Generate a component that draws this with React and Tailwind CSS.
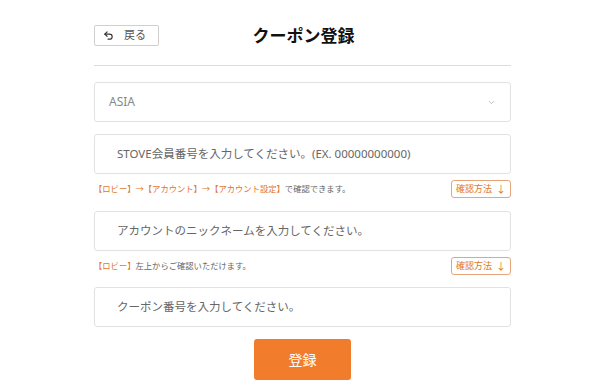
import React from 'react';
import { Undo2, ChevronDown } from 'lucide-react';

const font = { fontFamily: '"Noto Sans", "Noto Sans CJK JP", sans-serif' };

const Field = ({ placeholder }) => (
  <div className="flex h-[40px] items-center rounded-[3px] border border-[#e2e2e2] bg-white pl-[22px]">
    <span className="text-[11.5px] text-[#666]">{placeholder}</span>
  </div>
);

const Helper = ({ children }) => (
  <div className="mt-[6px] flex h-[18px] items-center justify-between">
    <p className="text-[8.3px] leading-none text-[#666]">{children}</p>
    <button className="flex h-[18px] w-[60px] items-center justify-center gap-1 rounded-[3px] border border-[#e8a57a] bg-white text-[9px] text-[#e0762d]">
      確認方法 <span className="text-[10px]">↓</span>
    </button>
  </div>
);

export default function App() {
  return (
    <div className="min-h-[389px] w-[600px] bg-white" style={font}>
      <div className="ml-[94px] w-[417px] pt-[25px]">
        <div className="relative flex h-[21px] items-center justify-center">
          <button className="absolute left-0 top-0 flex h-[21px] w-[65px] items-center gap-[10px] rounded-[2px] border border-[#cfcfcf] bg-white pl-[8px] text-[11px] text-[#555]">
            <Undo2 className="h-[11px] w-[11px] text-[#333]" strokeWidth={2.5} />
            戻る
          </button>
          <h1 className="pl-[2px] text-[17px] font-bold text-[#111]">クーポン登録</h1>
        </div>

        <div className="mt-[19px] h-px bg-[#dcdcdc]" />

        <div className="mt-[16px] flex h-[40px] items-center justify-between rounded-[3px] border border-[#e2e2e2] bg-white pl-[14px] pr-[14px]">
          <span className="text-[12px] text-[#888]">ASIA</span>
          <ChevronDown className="h-[9px] w-[9px] text-[#aaa]" />
        </div>

        <div className="mt-[12px]">
          <Field placeholder="STOVE会員番号を入力してください。(EX. 00000000000)" />
          <Helper>
            <span className="text-[#e0762d]">【ロビー】→【アカウント】→【アカウント設定】</span>で確認できます。
          </Helper>
        </div>

        <div className="mt-[13px]">
          <Field placeholder="アカウントのニックネームを入力してください。" />
          <Helper>
            <span className="text-[#e0762d]">【ロビー】</span>左上からご確認いただけます。
          </Helper>
        </div>

        <div className="mt-[12px]">
          <Field placeholder="クーポン番号を入力してください。" />
        </div>

        <div className="mt-[12px] flex justify-center">
          <button className="h-[41px] w-[97px] rounded-[3px] bg-[#f07c2c] text-[14px] text-white">
            登録
          </button>
        </div>
      </div>
    </div>
  );
}
